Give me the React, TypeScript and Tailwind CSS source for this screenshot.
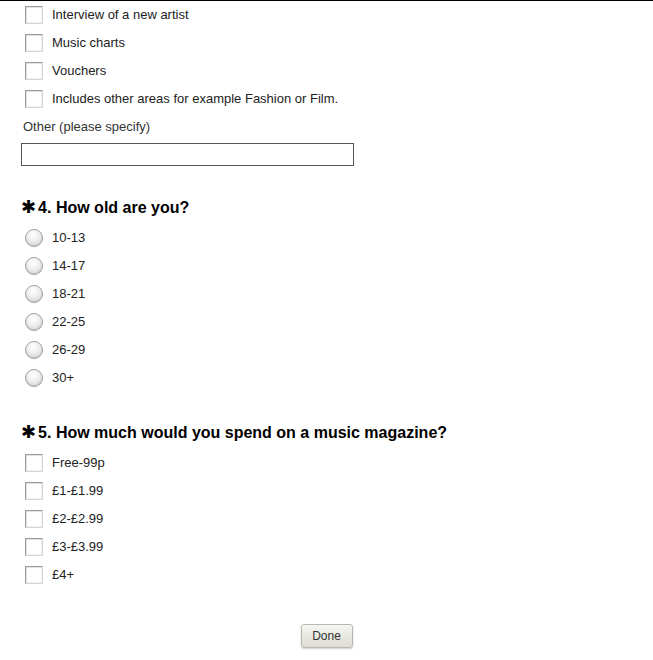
import React from 'react';

const font = { fontFamily: '"Liberation Sans", Arial, sans-serif' };

function CheckBox() {
  return (
    <span className="block h-[18px] w-[18px] shrink-0 border border-t-[#9a9a9a] border-l-[#9a9a9a] border-r-[#d6d6d6] border-b-[#d6d6d6] bg-white shadow-[inset_1px_1px_0_#e2e2e2,inset_-1px_-1px_0_#f0f0f0]" />
  );
}

function Radio() {
  return (
    <span className="block h-[18px] w-[18px] shrink-0 rounded-full border border-[#a0a0a0] bg-[radial-gradient(circle_at_45%_30%,#ffffff_0%,#f2f2f2_35%,#cfcfcf_100%)] shadow-[inset_0_-1px_1px_rgba(0,0,0,0.1)]" />
  );
}

function OptionRow({ label, type }: { label: string; type: 'check' | 'radio' }) {
  return (
    <label className="flex h-[28px] items-center gap-[9px] pl-[25px] text-[13px] text-[#222]">
      {type === 'check' ? <CheckBox /> : <Radio />}
      <span>{label}</span>
    </label>
  );
}

function Question({ number, text }: { number: number; text: string }) {
  return (
    <h2 className="flex h-[20px] items-start pl-[21px] text-[16px] font-bold leading-[20px] text-black">
      <span
        className="mr-[2px] -mt-[1px] text-[18px] leading-[20px]"
        style={{ fontFamily: '"DejaVu Sans", sans-serif' }}
      >
        ✱
      </span>
      <span>
        {number}. {text}
      </span>
    </h2>
  );
}

export default function App() {
  const topics = ['Interview of a new artist', 'Music charts', 'Vouchers', 'Includes other areas for example Fashion or Film.'];
  const ages = ['10-13', '14-17', '18-21', '22-25', '26-29', '30+'];
  const prices = ['Free-99p', '£1-£1.99', '£2-£2.99', '£3-£3.99', '£4+'];

  return (
    <div className="min-h-[660px] w-full border-t border-black bg-white" style={font}>
      <div className="flex flex-col">
        {topics.map((t) => (
          <OptionRow key={t} label={t} type="check" />
        ))}
        <div className="flex h-[28px] items-center pl-[23px] text-[13px] text-[#333]">Other (please specify)</div>
        <input
          type="text"
          className="ml-[21px] mt-[2px] h-[23px] w-[333px] border border-[#555] bg-white px-1 text-[13px] outline-none"
        />

        <div className="mt-[32px]">
          <Question number={4} text="How old are you?" />
        </div>
        <div className="mt-[6px] flex flex-col">
          {ages.map((a) => (
            <OptionRow key={a} label={a} type="radio" />
          ))}
        </div>

        <div className="mt-[31px]">
          <Question number={5} text="How much would you spend on a music magazine?" />
        </div>
        <div className="mt-[6px] flex flex-col">
          {prices.map((p) => (
            <OptionRow key={p} label={p} type="check" />
          ))}
        </div>

        <div className="mt-[35px] flex justify-center">
          <button
            type="button"
            className="h-[24px] w-[52px] rounded-[3px] border border-[#b8b8b0] bg-gradient-to-b from-[#f6f6f2] to-[#dcdcd4] text-[12px] text-[#333] shadow-[0_1px_2px_rgba(0,0,0,0.2)]"
          >
            Done
          </button>
        </div>
      </div>
    </div>
  );
}
